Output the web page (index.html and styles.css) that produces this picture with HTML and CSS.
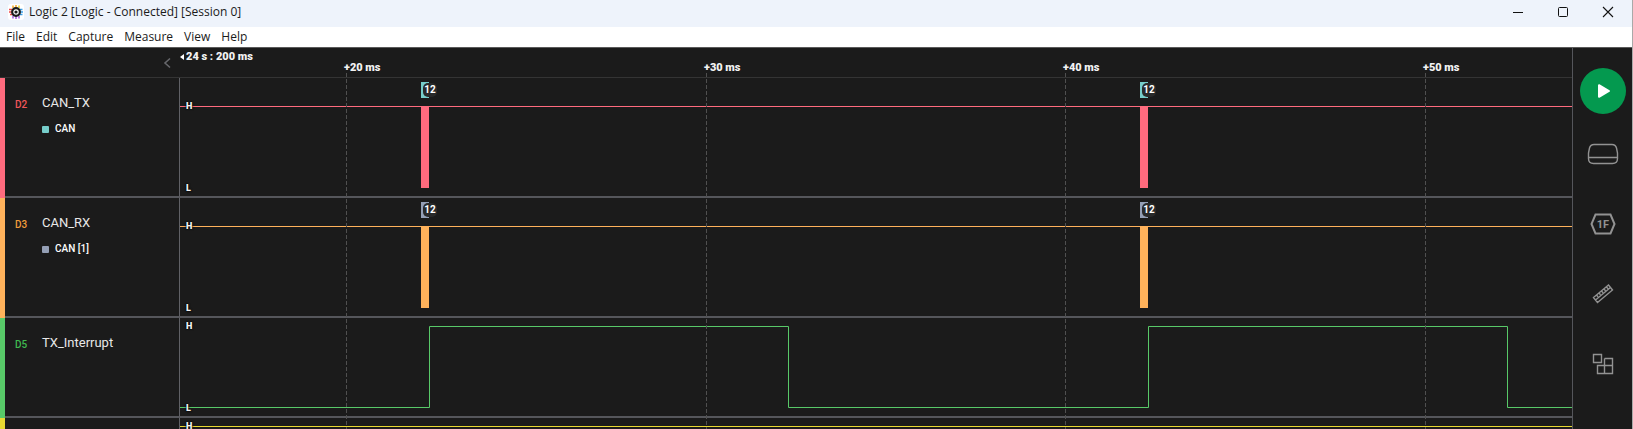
FILE: index.html
```html
<!DOCTYPE html>
<html lang="en">
<head>
<meta charset="utf-8">
<title>Logic 2 [Logic - Connected] [Session 0]</title>
<link rel="stylesheet" href="styles.css">
</head>
<body>
<div class="window">
  <header class="titlebar">
    <svg class="app-icon" width="16" height="16" viewBox="0 0 16 16">
      <rect width="16" height="16" rx="3" fill="#fff"/>
      <path d="M5 1.500V4M8 1V4" stroke="#f5a623" stroke-width="1.500"/>
      <path d="M11 1.500V4" stroke="#e8d22e" stroke-width="1.500"/>
      <path d="M1 5.500H4M1 8H4M2 10.500H4" stroke="#ef4a4a" stroke-width="1.500"/>
      <path d="M12 5.500H14.500M12 8H15M12 10.500H14.500" stroke="#3aa0ea" stroke-width="1.500"/>
      <path d="M5 12V14.500M8 12V15M11 12V14.500" stroke="#a45be0" stroke-width="1.500"/>
      <circle cx="8" cy="8" r="4.900" fill="#1c1c1c"/>
      <circle cx="8" cy="8" r="2.200" fill="#1c1c1c" stroke="#fff" stroke-width="1.200"/>
    </svg>
    <span class="title">Logic 2 [Logic - Connected] [Session 0]</span>
    <div class="controls">
      <button class="control" aria-label="Minimize"><svg width="12" height="12"><path d="M1 6.500H11" stroke="#111"/></svg></button>
      <button class="control" aria-label="Maximize"><svg width="12" height="12"><rect x="1.500" y="1.500" width="9" height="9" rx="1" fill="none" stroke="#111"/></svg></button>
      <button class="control" aria-label="Close"><svg width="12" height="12"><path d="M1 1L11 11M11 1L1 11" stroke="#111" stroke-width="1.100"/></svg></button>
    </div>
  </header>
  <nav class="menubar">
    <button class="menu">File</button><button class="menu">Edit</button><button class="menu">Capture</button><button class="menu">Measure</button><button class="menu">View</button><button class="menu">Help</button>
  </nav>
  <div class="workspace">
    <main class="session">
      <div class="ruler">
        <button class="collapse" aria-label="Collapse channel list"><svg width="8" height="12"><path d="M7 1.500L2 6L7 10.500" fill="none" stroke="#66676b" stroke-width="1.600"/></svg></button>
        <div class="scale">
          <span class="origin"><svg width="4" height="6"><path d="M4 0V6L0 3Z" fill="#fff"/></svg>24 s : 200 ms</span>
          <span class="tick tick-1">+20 ms</span>
          <span class="tick tick-2">+30 ms</span>
          <span class="tick tick-3">+40 ms</span>
          <span class="tick tick-4">+50 ms</span>
        </div>
      </div>
      <div class="channels">
        <section class="channel red">
          <div class="label">
            <span class="pin">D2</span><span class="name">CAN_TX</span>
            <span class="analyzer"><i class="swatch teal"></i>CAN</span>
          </div>
          <div class="wave">
            <svg class="trace" width="100%" height="118">
              <rect x="0" y="28" width="100%" height="1"/>
              <rect x="241" y="28" width="8" height="82"/>
              <rect x="960" y="28" width="8" height="82"/>
            </svg>
            <span class="level high">H</span><span class="level low">L</span>
            <span class="frame teal first"><span class="value">12</span></span><span class="frame teal second"><span class="value">12</span></span>
          </div>
        </section>
        <section class="channel orange">
          <div class="label">
            <span class="pin">D3</span><span class="name">CAN_RX</span>
            <span class="analyzer"><i class="swatch slate"></i>CAN [1]</span>
          </div>
          <div class="wave">
            <svg class="trace" width="100%" height="118">
              <rect x="0" y="28" width="100%" height="1"/>
              <rect x="241" y="28" width="8" height="82"/>
              <rect x="960" y="28" width="8" height="82"/>
            </svg>
            <span class="level high">H</span><span class="level low">L</span>
            <span class="frame slate first"><span class="value">12</span></span><span class="frame slate second"><span class="value">12</span></span>
          </div>
        </section>
        <section class="channel green short">
          <div class="label"><span class="pin">D5</span><span class="name">TX_Interrupt</span></div>
          <div class="wave">
            <svg class="trace" width="100%" height="98">
              <path d="M0 89.500H249.500V8.500H608.500V89.500H968.500V8.500H1327.500V89.500H4000" class="line"/>
            </svg>
            <span class="level high">H</span><span class="level low">L</span>
          </div>
        </section>
        <section class="channel yellow short">
          <div class="label"></div>
          <div class="wave">
            <svg class="trace" width="100%" height="98"><rect x="0" y="8" width="100%" height="1"/></svg>
            <span class="level high">H</span>
          </div>
        </section>
      </div>
      <svg class="grid" aria-hidden="true">
        <path d="M166.500 0V2000M526.500 0V2000M885.500 0V2000M1245.500 0V2000"/>
      </svg>
    </main>
    <aside class="sidebar">
      <button class="start" aria-label="Start capture"><svg width="14" height="16"><path d="M2 2.200V13.800L12 8Z" fill="#fff" stroke="#fff" stroke-width="2" stroke-linejoin="round"/></svg></button>
      <button class="tool" aria-label="Device"><svg width="32" height="22" viewBox="0 0 32 22"><path d="M7 1.500H25Q28.500 1.500 29.500 5L30.500 10V15.500Q30.500 20.500 25.500 20.500H6.500Q1.500 20.500 1.500 15.500V10L2.500 5Q3.500 1.500 7 1.500ZM2 14.500H30"/></svg></button>
      <button class="tool" aria-label="Analyzers"><svg width="26" height="22" viewBox="0 0 26 22"><path d="M5.500 1.500H20.500L24.500 11L20.500 20.500H5.500L1.500 11Z" stroke-width="2"/><text x="13" y="15" text-anchor="middle">1F</text></svg></button>
      <button class="tool" aria-label="Measurements"><svg width="22" height="22" viewBox="0 0 22 22"><path d="M1.500 14.500L16.500 2L20.500 7L5.500 19.500ZM3.500 17L18.500 4.500M4.500 12L6 13.800M7 10L8.500 11.800M9.500 8L11 9.800M12 6L13.500 7.800M14.500 4L16 5.800"/></svg></button>
      <button class="tool" aria-label="Extensions"><svg width="22" height="22" viewBox="0 0 22 22"><path d="M1.500 1.500H9.500V9.500H1.500ZM12.500 5.500H20.500V20.500H5.500V12.500H20.500M12.500 5.500V20.500"/></svg></button>
    </aside>
  </div>
</div>
</body>
</html>
```
FILE: styles.css
```css
* { box-sizing: border-box; }
body {
  margin: 0;
  background: #1b1b1b;
  font-family: Roboto, sans-serif;
  color: #e8e8e8;
}
button {
  display: flex;
  align-items: center;
  justify-content: center;
  margin: 0;
  padding: 0;
  border: 0;
  background: none;
  font: inherit;
  color: inherit;
}
svg { display: block; flex: none; }
.window {
  display: flex;
  flex-direction: column;
  height: 100vh;
  overflow: hidden;
  border-right: 1px solid #a9a9a9;
}
.titlebar {
  display: flex;
  flex: none;
  align-items: center;
  height: 27px;
  padding: 0 2px 4px 8px;
  background: #eef3fb;
  color: #1a1a1a;
  font: 12px "Open Sans", "Noto Sans", sans-serif;
}
.title { margin-left: 5px; }
.controls { display: flex; margin-left: auto; }
.control { width: 45px; height: 23px; }
.menubar {
  display: flex;
  flex: none;
  gap: 11px;
  height: 20px;
  padding: 0 0 2px 6px;
  background: #fff;
  color: #1a1a1a;
  font: 12px "Open Sans", "Noto Sans", sans-serif;
}
.workspace {
  display: flex;
  flex: 1;
  min-height: 0;
  border-top: 1px solid #5a5a5a;
}
.session {
  position: relative;
  flex: 1;
  min-width: 0;
  overflow: hidden;
}
.ruler { display: flex; height: 30px; border-bottom: 1px solid #343434; }
.collapse { width: 20px; margin-left: 157px; margin-right: 3px; }
.scale {
  position: relative;
  flex: 1;
  font-size: 11px;
  line-height: 14px;
  font-weight: 900;
  color: #f2f2f2;
}
.origin { display: flex; align-items: center; gap: 2px; padding-top: 2px; }
.tick { position: absolute; top: 13px; }
.tick-1 { left: 164px; }
.tick-2 { left: 524px; }
.tick-3 { left: 883px; }
.tick-4 { left: 1243px; }
.channel {
  display: flex;
  height: 120px;
  border-left: 5px solid var(--color);
}
.channel.short { height: 100px; }
.red { --color: #ff6b7e; --pin: #f0565a; }
.orange { --color: #ffb25b; --pin: #f09c3c; }
.green { --color: #58c968; --pin: #3fb950; }
.yellow { --color: #e8d832; --pin: #e8d832; }
.label {
  display: grid;
  grid-template-columns: 27px 1fr;
  align-content: start;
  width: 175px;
  padding: 15px 0 0 10px;
  border-right: 1px solid #606166;
  border-bottom: 2px solid #55565b;
}
.pin { padding-top: 2px; font-size: 10px; line-height: 20px; font-weight: 500; color: var(--pin); }
.name { font-size: 13px; line-height: 20px; }
.analyzer {
  display: flex;
  grid-column: 2;
  align-items: center;
  gap: 6px;
  margin-top: 6px;
  font-size: 10px;
  line-height: 16px;
  font-weight: 500;
  color: #fff;
}
.swatch { width: 7px; height: 7px; border-radius: 1px; background: var(--tag); }
.teal { --tag: #76cdca; }
.slate { --tag: #949fb5; }
.wave {
  position: relative;
  flex: 1;
  min-width: 0;
  overflow: hidden;
  border-bottom: 2px solid #55565b;
}
.trace { fill: var(--color); }
.line { fill: none; stroke: var(--color); }
.level {
  position: absolute;
  left: 6px;
  font-size: 9px;
  line-height: 10px;
  font-weight: 900;
  color: #f2f2f2;
  text-shadow: 0 0 2px #000, 0 0 2px #000;
}
.high { top: 23px; }
.low { bottom: 3px; }
.short .high { top: 3px; }
.frame {
  position: absolute;
  top: 4px;
  width: 8px;
  height: 16px;
  padding: 1px 0 0 2px;
  background: var(--tag);
}
.value {
  display: block;
  width: 14px;
  border-radius: 5px;
  background: #292929;
  font-size: 10px;
  line-height: 14px;
  font-weight: 700;
  text-align: center;
  color: #fff;
}
.first { left: 241px; }
.second { left: 960px; }
.grid {
  position: absolute;
  top: 25px;
  left: 180px;
  width: calc(100% - 180px);
  height: calc(100% - 25px);
  pointer-events: none;
}
.grid path { stroke: #505050; stroke-dasharray: 4 2; }
.sidebar {
  display: flex;
  flex-direction: column;
  align-items: center;
  width: 60px;
  padding-top: 20px;
  border-left: 1px solid #55565b;
}
.start {
  flex: none;
  width: 46px;
  height: 46px;
  margin-bottom: 5px;
  padding-left: 3px;
  border-radius: 50%;
  background: #04994f;
}
.tool { flex: none; width: 46px; height: 70px; }
.tool svg { fill: none; stroke: #929292; stroke-width: 1.4px; }
.tool text { fill: #929292; stroke: none; font-size: 11px; font-weight: 700; }
```
